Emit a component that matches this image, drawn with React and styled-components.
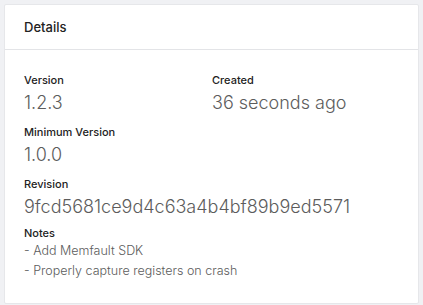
import React from 'react';
import styled, { createGlobalStyle } from 'styled-components';

const Global = createGlobalStyle`
    body {
        margin: 0;
        background: #f0f1f4;
        font-family: Inter, "Liberation Sans", sans-serif;
    }
`;

const Page = styled.div`
    padding: 4px 4px 5px 4px;
`;

const Card = styled.div`
    background: #fff;
    border: 1px solid #e6e7ea;
    border-radius: 2px;
`;

const Header = styled.div`
    height: 44px;
    display: flex;
    align-items: center;
    padding: 0 19px;
    border-bottom: 1px solid #e3e4e7;
    font-size: 13px;
    font-weight: 500;
    color: #222;
`;

const Body = styled.div`
    padding: 23px 19px 22px;
    display: flex;
    flex-direction: column;
    gap: 8px;
`;

const Row = styled.div`
    display: grid;
    grid-template-columns: 188px 1fr;
`;

const Field = styled.div`
    display: flex;
    flex-direction: column;
    margin-top: ${p => (p.$tight ? '-3px' : '0')};
`;

const Label = styled.div`
    font-size: 11px;
    font-weight: 500;
    color: #222;
    line-height: 15px;
`;

const Value = styled.div`
    font-size: 18px;
    font-weight: 300;
    color: #5c5c5c;
    line-height: 29px;
`;

const Note = styled.div`
    font-size: 12.5px;
    font-weight: 300;
    color: #5c5c5c;
    line-height: 20px;
`;

const Item = ({ label, value }) => (
    <Field>
        <Label>{label}</Label>
        <Value>{value}</Value>
    </Field>
);

export default function App() {
    return (
        <>
            <Global />
            <Page>
                <Card>
                    <Header>Details</Header>
                    <Body>
                        <Row>
                            <Item label="Version" value="1.2.3" />
                            <Item label="Created" value="36 seconds ago" />
                        </Row>
                        <Item label="Minimum Version" value="1.0.0" />
                        <Item label="Revision" value="9fcd5681ce9d4c63a4b4bf89b9ed5571" />
                        <Field $tight>
                            <Label>Notes</Label>
                            <Note>- Add Memfault SDK</Note>
                            <Note>- Properly capture registers on crash</Note>
                        </Field>
                    </Body>
                </Card>
            </Page>
        </>
    );
}
